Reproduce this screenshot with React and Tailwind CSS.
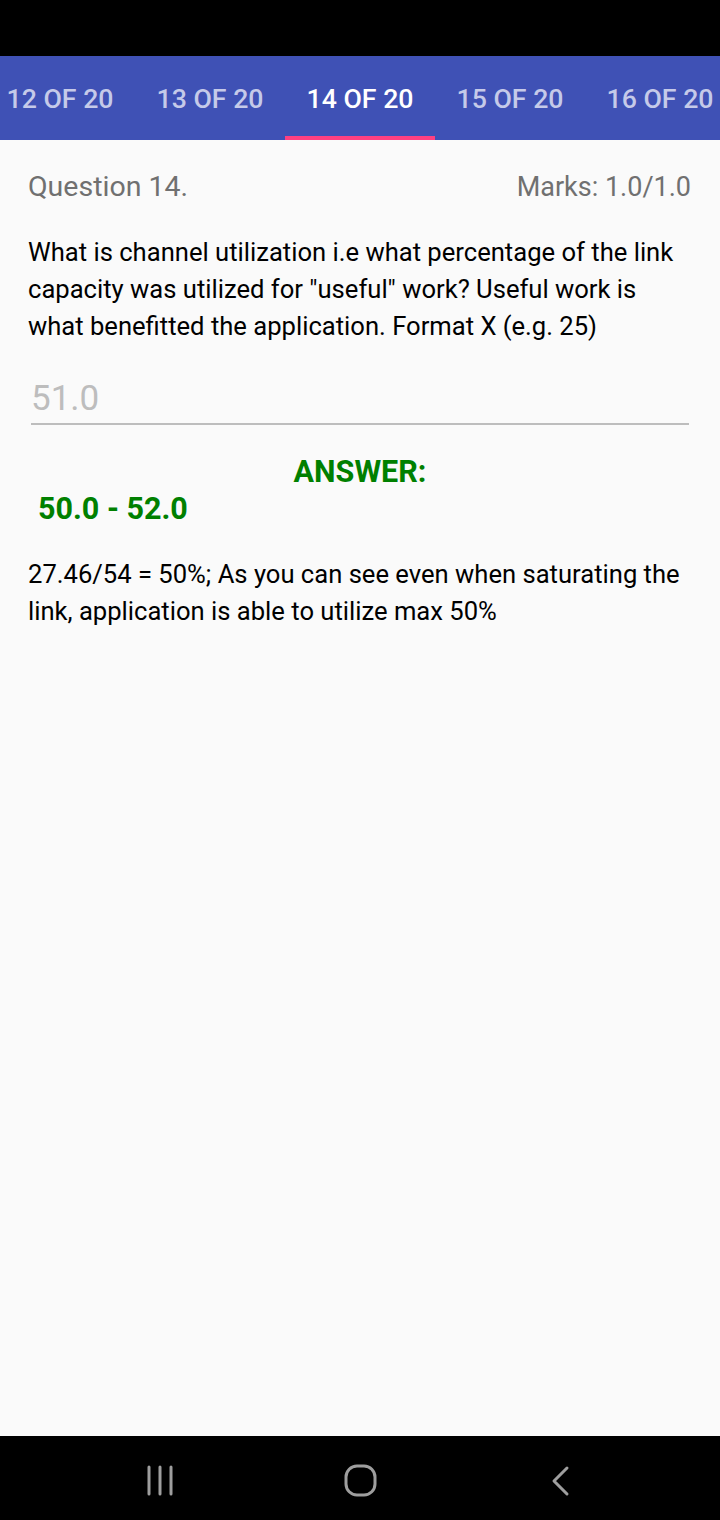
import React from "react";

export default function App() {
  const tabs = ["12 OF 20", "13 OF 20", "14 OF 20", "15 OF 20", "16 OF 20"];
  return (
    <div className="w-[720px] h-[1520px] flex flex-col bg-[#fafafa] overflow-hidden" style={{ fontFamily: "Roboto, 'Noto Sans', sans-serif" }}>
      <div className="h-[56px] bg-black shrink-0" />
      <div className="h-[84px] bg-[#3f51b5] shrink-0 flex overflow-hidden">
        <div className="flex ml-[-15px]">
          {tabs.map((t, i) => (
            <div key={t} className="w-[150px] h-[84px] shrink-0 flex flex-col">
              <div className={`flex-1 flex items-center justify-center text-[26.7px] font-medium pt-[6px] whitespace-nowrap ${i === 2 ? "text-white" : "text-[#c5cae9]"}`}>
                {t}
              </div>
              <div className={`h-[4px] ${i === 2 ? "bg-[#ff4081]" : ""}`} />
            </div>
          ))}
        </div>
      </div>
      <div className="flex-1 px-[28px] pt-[30px]">
        <div className="flex justify-between items-center text-[#707070] leading-[34px]">
          <span className="text-[28.5px]">Question 14.</span>
          <span className="text-[27px] mr-[1px]">Marks: 1.0/1.0</span>
        </div>
        <p className="mt-[30px] text-[25.6px] leading-[37px] text-black">
          What is channel utilization i.e what percentage of the link capacity was utilized for "useful" work? Useful work is what benefitted the application. Format X (e.g. 25)
        </p>
        <div className="mt-[33px] ml-[3px] mr-[3px] border-b-2 border-[#bdbdbd] pb-[3px]">
          <div className="text-[35px] leading-[42px] text-[#bdbdbd] pl-[0px]">51.0</div>
        </div>
        <div className="mt-[28px] text-center text-[30.5px] font-bold text-[#008000] leading-[38px]">ANSWER:</div>
        <div className="ml-[10px] mt-[-1px] text-[30.5px] font-bold text-[#008000] leading-[38px]">50.0 - 52.0</div>
        <p className="mt-[28px] text-[25.6px] leading-[37px] text-black">
          27.46/54 = 50%; As you can see even when saturating the link, application is able to utilize max 50%
        </p>
      </div>
      <div className="h-[84px] bg-black shrink-0 flex items-center justify-center pt-[5px]">
        <div className="w-[200px] flex justify-center">
          <svg width="30" height="31" viewBox="0 0 30 31">
            <g stroke="#9e9e9e" strokeWidth="3" strokeLinecap="round">
              <line x1="4" y1="2" x2="4" y2="29" />
              <line x1="15" y1="2" x2="15" y2="29" />
              <line x1="26" y1="2" x2="26" y2="29" />
            </g>
          </svg>
        </div>
        <div className="w-[200px] flex justify-center">
          <svg width="33" height="33" viewBox="0 0 33 33">
            <rect x="2" y="2" width="29" height="29" rx="11" fill="none" stroke="#9e9e9e" strokeWidth="3" />
          </svg>
        </div>
        <div className="w-[200px] flex justify-center">
          <svg width="21" height="32" viewBox="0 0 21 32">
            <polyline points="17,3 4,16 17,29" fill="none" stroke="#9e9e9e" strokeWidth="3" strokeLinecap="round" strokeLinejoin="round" />
          </svg>
        </div>
      </div>
    </div>
  );
}
